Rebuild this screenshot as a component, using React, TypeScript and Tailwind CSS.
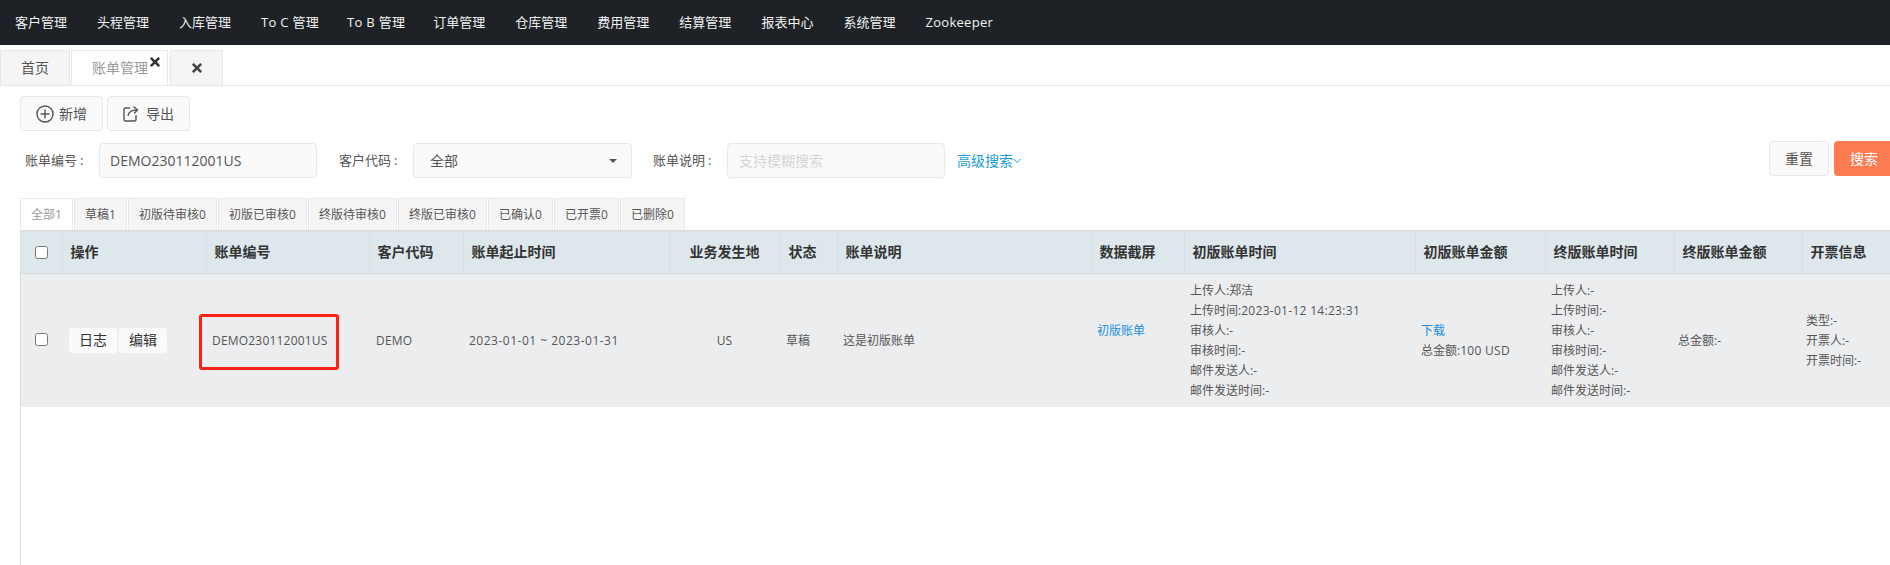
import { FaTimes } from "react-icons/fa";

const NAV = ["客户管理","头程管理","入库管理","To C 管理","To B 管理","订单管理","仓库管理","费用管理","结算管理","报表中心","系统管理","Zookeeper"];
const STATUS = [["全部1","w-[53px]"],["草稿1","w-[53px]"],["初版待审核0","w-[89px]"],["初版已审核0","w-[89px]"],["终版待审核0","w-[89px]"],["终版已审核0","w-[89px]"],["已确认0","w-[65px]"],["已开票0","w-[65px]"],["已删除0","w-[65px]"]];
const COLS = [41,144,163,94,206,111,57,254,93,231,130,129,128,120];
const HEAD = ["操作","账单编号","客户代码","账单起止时间","业务发生地","状态","账单说明","数据截屏","初版账单时间","初版账单金额","终版账单时间","终版账单金额","开票信息"];
const font = { fontFamily: '"Open Sans","Noto Sans CJK SC",sans-serif' };

function Lines({ items }: { items: string[] }) {
  return <div className="leading-5">{items.map((t) => <div key={t}>{t}</div>)}</div>;
}

function Label({ text, className }: { text: string; className: string }) {
  return <span className={`w-[74px] whitespace-nowrap ${className}`}>{text}<span className="ml-[3px]">:</span></span>;
}

export default function App() {
  return (
    <div className="h-[565px] w-[1890px] overflow-hidden bg-white text-[#555]" style={font}>
      <nav className="flex h-[45px] items-center bg-[#1e2226] pl-[15px] text-[13px] text-[#f2f2f2]">
        {NAV.map((n) => <span key={n} className={`whitespace-nowrap ${/[A-Z]/.test(n) ? "mr-[28px] tracking-[0.3px]" : "mr-[30px]"}`}>{n}</span>)}
      </nav>
      <div className="flex h-[41px] items-end border-b border-[#e7e7ee] pt-[5px] text-sm">
        <div className="flex h-[35px] w-[70px] items-center justify-center border border-b-0 border-[#e7e7ee] bg-[#f5f5f5]">首页</div>
        <div className="relative ml-px flex h-[35px] w-[97px] items-center border border-b-0 border-[#e7e7ee] bg-white pl-5 text-[#999]">
          账单管理
          <FaTimes className="absolute right-[5px] top-[4px] text-[14px] text-[#333]" />
        </div>
        <div className="ml-[2px] flex h-[35px] w-[53px] items-center justify-center border border-b-0 border-[#e7e7ee] bg-[#f5f5f5]">
          <FaTimes className="text-[14px] text-[#444]" />
        </div>
      </div>
      <div className="flex gap-[4px] pl-5 pt-[10px] text-sm">
        <button className="flex h-[35px] w-[83px] items-center justify-center gap-[5px] rounded border border-[#e7e7ee] bg-[#fafafa]">
          <svg width="18" height="18" viewBox="0 0 18 18" fill="none" stroke="#555" strokeWidth="1.4"><circle cx="9" cy="9" r="8"/><path d="M9 4.5v9M4.5 9h9"/></svg>
          新增
        </button>
        <button className="flex h-[35px] w-[83px] items-center justify-center gap-[7px] rounded border border-[#e7e7ee] bg-[#fafafa]">
          <svg width="16" height="17" viewBox="0 0 16 17" fill="none" stroke="#555" strokeWidth="1.4"><path d="M7 3H2.5A1.5 1.5 0 0 0 1 4.5v10A1.5 1.5 0 0 0 2.5 16h9a1.5 1.5 0 0 0 1.5-1.5V10"/><path d="M5 11c.5-4 3-6 9-6"/><path d="M10.5 1.5 14.5 5l-3.5 3.5"/></svg>
          导出
        </button>
      </div>
      <div className="mt-[12px] flex h-[35px] items-center pl-[25px] text-[13px]">
        <Label text="账单编号" className="" />
        <div className="flex h-[35px] w-[218px] items-center rounded border border-[#e7e7ee] bg-[#fafafa] pl-[10px] text-sm">DEMO230112001US</div>
        <Label text="客户代码" className="ml-[22px]" />
        <div className="relative flex h-[35px] w-[219px] items-center rounded border border-[#e7e7ee] bg-[#fafafa] pl-4 text-sm">
          全部
          <span className="absolute right-[14px] top-[15px] h-0 w-0 border-x-[4px] border-t-[4px] border-x-transparent border-t-[#555]" />
        </div>
        <Label text="账单说明" className="ml-[21px]" />
        <div className="flex h-[35px] w-[218px] items-center rounded border border-[#e7e7ee] bg-[#fafafa] pl-[11px] text-sm text-[#d5d5d5]">支持模糊搜索</div>
        <span className="ml-[12px] text-sm text-[#1a9bd8]">高级搜索</span>
        <svg width="8" height="6" viewBox="0 0 8 6" fill="none" stroke="#1a9bd8" strokeWidth="1"><path d="M.5 1l3.5 3.5L7.5 1"/></svg>
        <div className="ml-auto flex items-center gap-[5px] text-sm">
          <button className="relative -top-[2px] flex h-[35px] w-[60px] items-center justify-center rounded border border-[#e7e7ee] bg-[#fafafa]">重置</button>
          <button className="relative -top-[2px] -mr-[4px] flex h-[35px] w-[60px] items-center justify-center rounded bg-[#fc7c52] text-white">搜索</button>
        </div>
      </div>
      <div className="ml-5 mt-[20px] flex h-[32px] gap-px text-xs">
        {STATUS.map(([s, w], i) => (
          <div key={s} className={`flex items-center justify-center border border-b-0 border-[#e7e7ee] ${w} ${i === 0 ? "bg-white text-[#999]" : "bg-[#f5f5f5]"}`}>{s}</div>
        ))}
      </div>
      <div className="relative ml-5 h-[335px] w-[1902px] border-l border-t-2 border-[#ddd]">
        <table className="w-[1901px] table-fixed border-collapse text-xs">
          <colgroup>{COLS.map((c, i) => <col key={i} style={{ width: c }} />)}</colgroup>
          <thead>
            <tr className="h-[41px] border-b border-[#d5dbde] bg-[#dde7ec] text-sm font-bold text-[#333]">
              <th className="border-r border-[#d5dfe3] pl-[14px] text-left"><input type="checkbox" className="block h-[13px] w-[13px]" /></th>
              {HEAD.map((h) => (
                <th key={h} className={`whitespace-nowrap border-r border-[#d5dfe3] ${h === "业务发生地" ? "text-center" : "pl-2 text-left"}`}>{h}</th>
              ))}
              <th />
            </tr>
          </thead>
          <tbody>
            <tr className="h-[134px] bg-[#ecedef] [&>td]:pt-[2px]">
              <td className="pl-[14px] [&]:pt-0"><input type="checkbox" className="mb-[4px] block h-[13px] w-[13px]" /></td>
              <td className="pl-[7px] [&]:pt-0">
                <div className="mb-[2px] flex gap-[2px] text-sm text-[#333]">
                  <button className="h-[25px] w-[48px] rounded-[3px] bg-[#fafafa]">日志</button>
                  <button className="h-[25px] w-[48px] rounded-[3px] bg-[#fafafa]">编辑</button>
                </div>
              </td>
              <td className="relative pl-[6px] tracking-[0.2px]">
                DEMO230112001US
                <div className="absolute left-[-7px] top-[40px] h-[56px] w-[140px] rounded-[3px] border-[3px] border-[#ff2010]" />
              </td>
              <td className="pl-[7px] tracking-[0.2px]">DEMO</td>
              <td className="pl-[6px] tracking-[0.5px]">2023-01-01 ~ 2023-01-31</td>
              <td className="text-center">US</td>
              <td className="pl-[6px]">草稿</td>
              <td className="pl-[6px]">这是初版账单</td>
              <td className="pl-[6px]"><div className="leading-5 text-[#1a8fe3]">初版账单</div><div className="h-5" /></td>
              <td className="pl-[6px]">
                <div className="leading-5">
                  <div>上传人:郑洁</div>
                  <div>上传时间:<span className="tracking-[0.3px]">2023-01-12 14:23:31</span></div>
                  <div>审核人:-</div>
                  <div>审核时间:-</div>
                  <div>邮件发送人:-</div>
                  <div>邮件发送时间:-</div>
                </div>
              </td>
              <td className="pl-[6px]"><div className="leading-5 text-[#1a8fe3]">下载</div><div className="leading-5">总金额:<span className="tracking-[0.3px]">100 USD</span></div></td>
              <td className="pl-[6px]"><Lines items={["上传人:-","上传时间:-","审核人:-","审核时间:-","邮件发送人:-","邮件发送时间:-"]} /></td>
              <td className="pl-[4px]">总金额:-</td>
              <td className="pl-[4px]"><Lines items={["类型:-","开票人:-","开票时间:-"]} /></td>
              <td />
            </tr>
          </tbody>
        </table>
      </div>
    </div>
  );
}
